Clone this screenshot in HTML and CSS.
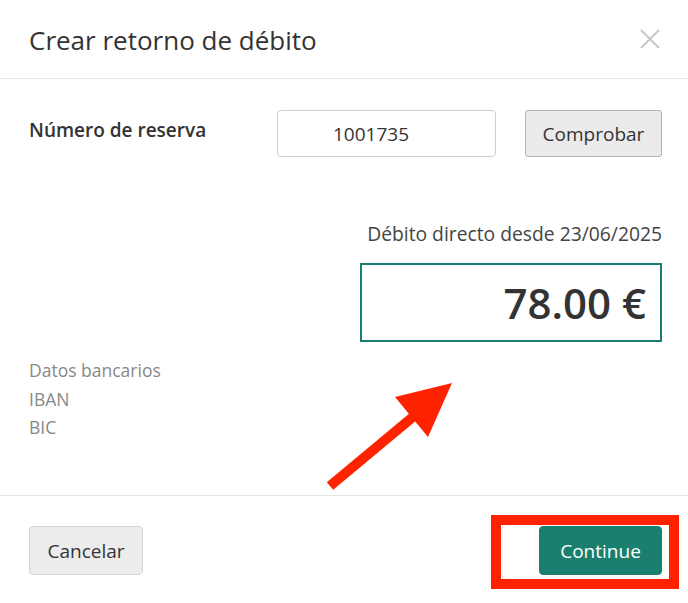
FILE: index.html
```html
<!DOCTYPE html>
<html lang="es">
<head>
    <meta charset="UTF-8">
    <meta name="viewport" content="width=device-width, initial-scale=1.0">
    <title>Crear retorno de débito</title>
    <link rel="stylesheet" href="styles.css">
</head>
<body>
    <div class="modal">
        <div class="modal-header">
            <h1 class="modal-title">Crear retorno de débito</h1>
            <button class="close" aria-label="Cerrar">
                <svg width="20" height="20" viewBox="0 0 20 20">
                    <path d="M1 1 L19 19 M19 1 L1 19" stroke="#c9c9c9" stroke-width="2.2" fill="none"/>
                </svg>
            </button>
        </div>

        <div class="modal-body">
            <div class="booking-row">
                <label class="booking-label" for="booking">Número de reserva</label>
                <input class="booking-input" id="booking" type="text" value="1001735">
                <button class="btn btn-default btn-check">Comprobar</button>
            </div>

            <div class="debit-info">Débito directo desde 23/06/2025</div>
            <div class="amount">78.00 €</div>

            <div class="bank-info">
                <div>Datos bancarios</div>
                <div>IBAN</div>
                <div>BIC</div>
            </div>
        </div>

        <div class="modal-footer">
            <button class="btn btn-default btn-cancel">Cancelar</button>
            <button class="btn btn-primary btn-continue">Continue</button>
        </div>
    </div>

    <!-- annotation overlay -->
    <svg class="arrow" width="688" height="603" viewBox="0 0 688 603">
        <line x1="330" y1="486" x2="414" y2="416" stroke="#ff2200" stroke-width="10"/>
        <polygon points="452,383 395,397 428,437" fill="#ff2200"/>
    </svg>
    <div class="highlight"></div>
</body>
</html>
```

FILE: styles.css
```css
* {
    margin: 0;
    padding: 0;
    box-sizing: border-box;
}

body {
    font-family: 'Open Sans', 'Noto Sans', sans-serif;
    background: #fff;
    color: #333;
    width: 688px;
    height: 603px;
    overflow: hidden;
    position: relative;
}

.modal {
    background: #fff;
}

.modal-header {
    height: 79px;
    padding: 0 28px 0 29px;
    display: flex;
    align-items: center;
    justify-content: space-between;
    border-bottom: 1px solid #e5e5e5;
}

.modal-title {
    font-size: 26px;
    font-weight: 400;
    color: #333;
    margin-top: 1px;
}

.close {
    background: none;
    border: none;
    width: 20px;
    height: 20px;
    display: flex;
}

.modal-body {
    padding: 31px 26px 53.5px 29px;
}

.booking-row {
    display: flex;
    align-items: flex-start;
}

.booking-label {
    flex: 1;
    font-size: 19px;
    font-weight: 600;
    padding-top: 7px;
    color: #333;
}

.booking-input {
    width: 219px;
    height: 47px;
    border: 1px solid #cfcfcf;
    border-radius: 4px;
    padding-left: 55px;
    font-family: inherit;
    font-size: 19px;
    color: #333;
    outline: none;
}

.btn {
    font-family: inherit;
    font-size: 19px;
    border-radius: 4px;
    cursor: pointer;
}

.btn-default {
    background: #ececec;
    border: 1px solid #d6d6d6;
    color: #333;
}

.btn-check {
    width: 137px;
    height: 47px;
    margin-left: 29px;
    border-color: #b3b3b3;
    border-radius: 3px;
    background: #ebebeb;
}

.debit-info {
    margin-top: 64px;
    text-align: right;
    font-size: 19.3px;
    line-height: 26px;
    color: #444;
}

.amount {
    margin: 16px 0 0 auto;
    width: 302px;
    height: 79px;
    border: 2px solid #1b7d6f;
    display: flex;
    align-items: center;
    justify-content: flex-end;
    padding-right: 14px;
    font-size: 42px;
    font-weight: 600;
    color: #333;
}

.bank-info {
    margin-top: 14px;
    font-size: 17.5px;
    line-height: 28.5px;
    color: #888;
}

.modal-footer {
    border-top: 1px solid #e5e5e5;
    padding: 30px 26px 28px 29px;
    display: flex;
    justify-content: space-between;
}

.btn-cancel {
    width: 114px;
    height: 49px;
}

.btn-primary {
    background: #1b7f70;
    border: 1px solid #1b7f70;
    color: #fff;
}

.btn-continue {
    width: 123px;
    height: 49px;
}

.arrow {
    position: absolute;
    left: 0;
    top: 0;
    pointer-events: none;
}

.highlight {
    position: absolute;
    left: 491px;
    top: 515px;
    width: 188px;
    height: 74px;
    border: 10px solid #ff2200;
    pointer-events: none;
}
```
